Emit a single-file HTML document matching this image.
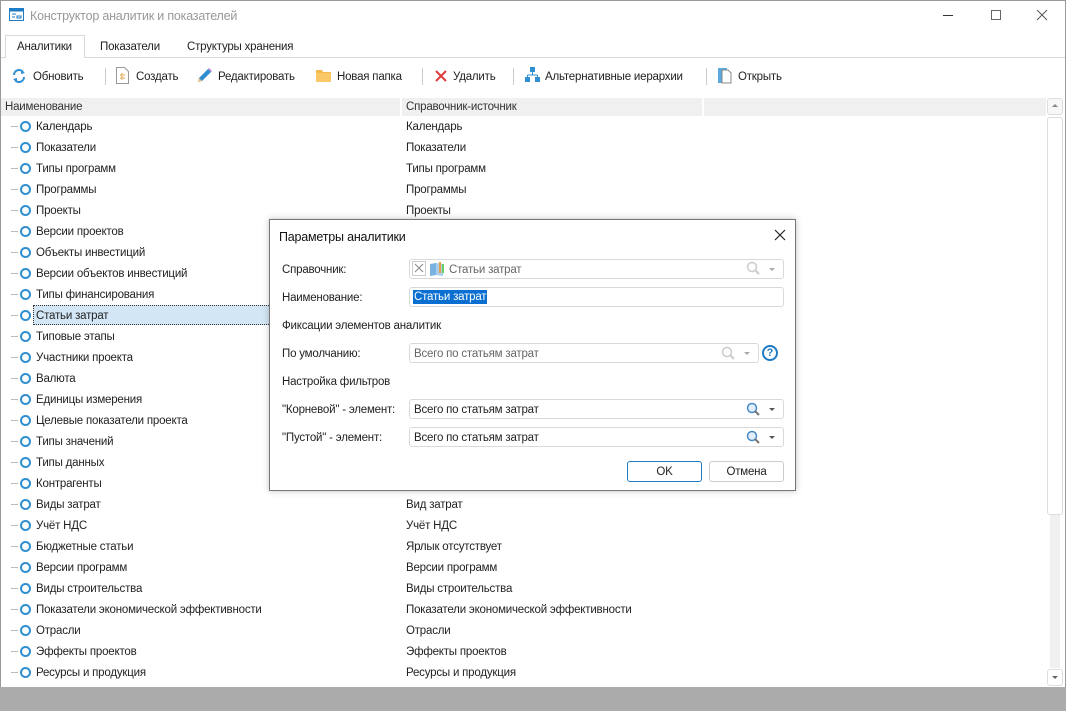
<!DOCTYPE html>
<html><head><meta charset="utf-8"><style>
*{box-sizing:border-box;margin:0;padding:0}
body{width:1066px;height:711px;position:relative;overflow:hidden;background:#fff;font-family:"Liberation Sans",sans-serif;font-size:11.5px;letter-spacing:-0.2px;color:#222;line-height:16px}
.a{position:absolute;white-space:nowrap}
.row{position:absolute;left:0;width:1046px;height:21px;line-height:23px}
.row .dash{position:absolute;left:11px;top:10px;width:7px;border-top:1px solid #bbb}
.row .c{position:absolute;left:20px;top:5px;width:11px;height:11px;border:2px solid #2f8fd1;border-radius:50%}
.row .n{position:absolute;left:36px}
.row .s{position:absolute;left:406px}
.inp{position:absolute;border:1px solid #d9d9d9;border-radius:3px;background:#fff;height:20px;line-height:20px;padding-left:4px}
.lbl{position:absolute;left:282px}
.sep{position:absolute;top:68px;width:1px;height:17px;background:#ccc}
</style></head><body>
<div class="a" style="left:0;top:0;width:1066px;height:711px;border:1px solid #999"></div>
<svg class="a" style="left:9px;top:8px" width="15" height="13"><rect x="0.5" y="0.5" width="14" height="12" fill="#fff" stroke="#1e7bc4"/><rect x="0.5" y="0.5" width="14" height="3" fill="#1e7bc4"/><line x1="3" y1="6" x2="7" y2="6" stroke="#1e7bc4"/><line x1="3" y1="9" x2="6" y2="9" stroke="#1e7bc4"/><rect x="8" y="8" width="4" height="2" fill="none" stroke="#1e7bc4"/></svg>
<div class="a" style="left:30px;top:8px;font-size:12.5px;color:#999">Конструктор аналитик и показателей</div>
<div class="a" style="left:943px;top:15px;width:10px;border-top:1px solid #333"></div>
<div class="a" style="left:991px;top:10px;width:10px;height:10px;border:1px solid #666"></div>
<svg class="a" style="left:1036px;top:9px" width="12" height="12"><path d="M1 1L11 11M11 1L1 11" stroke="#555"/></svg>
<div class="a" style="left:1px;top:57px;width:1064px;border-top:1px solid #d9d9d9"></div>
<div class="a" style="left:5px;top:35px;width:80px;height:23px;background:#fff;border:1px solid #d9d9d9;border-bottom:none"></div>
<div class="a" style="left:17px;top:39px">Аналитики</div>
<div class="a" style="left:100px;top:39px">Показатели</div>
<div class="a" style="left:187px;top:39px">Структуры хранения</div>
<svg class="a" style="left:11px;top:68px" width="16" height="16"><path d="M3 7A5 5 0 0 1 12 4" stroke="#2f8fd1" stroke-width="2" fill="none"/><path d="M13 9A5 5 0 0 1 4 12" stroke="#2f8fd1" stroke-width="2" fill="none"/><path d="M10 2L14 5L10 6Z M6 14L2 11L6 10Z" fill="#2f8fd1"/></svg>
<div class="a" style="left:33px;top:69px">Обновить</div>
<div class="sep" style="left:105px"></div>
<svg class="a" style="left:116px;top:67px" width="13" height="17"><path d="M0.5 0.5H8.5L12.5 4.5V16.5H0.5Z" fill="#fff" stroke="#999"/><path d="M4 8H6M7 8H9M4 11H6M7 11H9M6 6V13" stroke="#e0a040"/></svg>
<div class="a" style="left:136px;top:69px">Создать</div>
<svg class="a" style="left:196px;top:67px" width="17" height="17"><path d="M2 15L3 11L12 2L15 5L6 14Z" fill="#2f8fd1"/><path d="M12 2L15 5L16 4L13 1Z" fill="#c080d0"/><path d="M2 15L3 11L6 14Z" fill="#f0c080"/></svg>
<div class="a" style="left:218px;top:69px">Редактировать</div>
<svg class="a" style="left:316px;top:69px" width="15" height="13"><path d="M0 1H6L7 3H15V13H0Z" fill="#f5b94d"/><rect x="0" y="4" width="15" height="9" fill="#fbc869"/></svg>
<div class="a" style="left:337px;top:69px">Новая папка</div>
<div class="sep" style="left:422px"></div>
<svg class="a" style="left:435px;top:70px" width="12" height="12"><path d="M1 1L11 11M11 1L1 11" stroke="#e03c3c" stroke-width="2"/></svg>
<div class="a" style="left:453px;top:69px">Удалить</div>
<div class="sep" style="left:513px"></div>
<svg class="a" style="left:525px;top:67px" width="15" height="15"><rect x="5" y="0" width="5" height="5" fill="#2f8fd1"/><rect x="0" y="10" width="5" height="5" fill="#2f8fd1"/><rect x="10" y="10" width="5" height="5" fill="#2f8fd1"/><path d="M7.5 5V8M2.5 8H12.5M2.5 8V10M12.5 8V10" stroke="#2f8fd1"/></svg>
<div class="a" style="left:545px;top:69px">Альтернативные иерархии</div>
<div class="sep" style="left:706px"></div>
<svg class="a" style="left:718px;top:67px" width="14" height="17"><path d="M0 1H9V16H0Z" fill="#5aa8dc"/><path d="M4 3H10L13 6V16H4Z" fill="#fff" stroke="#888"/></svg>
<div class="a" style="left:738px;top:69px">Открыть</div>
<div class="a" style="left:1px;top:98px;width:1045px;height:18px;background:#f0f0f0"></div>
<div class="a" style="left:400px;top:98px;width:2px;height:18px;background:#fff"></div>
<div class="a" style="left:702px;top:98px;width:2px;height:18px;background:#fff"></div>
<div class="a" style="left:5px;top:99px;color:#333">Наименование</div>
<div class="a" style="left:406px;top:99px;color:#333">Справочник-источник</div>
<div class="a" style="left:33px;top:305px;width:380px;height:20px;background:#d3e6f5;border:1px dotted #333"></div>
<div class="row" style="top:116px"><i class="dash"></i><i class="c"></i><span class="n">Календарь</span><span class="s">Календарь</span></div>
<div class="row" style="top:137px"><i class="dash"></i><i class="c"></i><span class="n">Показатели</span><span class="s">Показатели</span></div>
<div class="row" style="top:158px"><i class="dash"></i><i class="c"></i><span class="n">Типы программ</span><span class="s">Типы программ</span></div>
<div class="row" style="top:179px"><i class="dash"></i><i class="c"></i><span class="n">Программы</span><span class="s">Программы</span></div>
<div class="row" style="top:200px"><i class="dash"></i><i class="c"></i><span class="n">Проекты</span><span class="s">Проекты</span></div>
<div class="row" style="top:221px"><i class="dash"></i><i class="c"></i><span class="n">Версии проектов</span></div>
<div class="row" style="top:242px"><i class="dash"></i><i class="c"></i><span class="n">Объекты инвестиций</span></div>
<div class="row" style="top:263px"><i class="dash"></i><i class="c"></i><span class="n">Версии объектов инвестиций</span></div>
<div class="row" style="top:284px"><i class="dash"></i><i class="c"></i><span class="n">Типы финансирования</span></div>
<div class="row" style="top:305px"><i class="dash"></i><i class="c"></i><span class="n">Статьи затрат</span></div>
<div class="row" style="top:326px"><i class="dash"></i><i class="c"></i><span class="n">Типовые этапы</span></div>
<div class="row" style="top:347px"><i class="dash"></i><i class="c"></i><span class="n">Участники проекта</span></div>
<div class="row" style="top:368px"><i class="dash"></i><i class="c"></i><span class="n">Валюта</span></div>
<div class="row" style="top:389px"><i class="dash"></i><i class="c"></i><span class="n">Единицы измерения</span></div>
<div class="row" style="top:410px"><i class="dash"></i><i class="c"></i><span class="n">Целевые показатели проекта</span></div>
<div class="row" style="top:431px"><i class="dash"></i><i class="c"></i><span class="n">Типы значений</span></div>
<div class="row" style="top:452px"><i class="dash"></i><i class="c"></i><span class="n">Типы данных</span></div>
<div class="row" style="top:473px"><i class="dash"></i><i class="c"></i><span class="n">Контрагенты</span></div>
<div class="row" style="top:494px"><i class="dash"></i><i class="c"></i><span class="n">Виды затрат</span><span class="s">Вид затрат</span></div>
<div class="row" style="top:515px"><i class="dash"></i><i class="c"></i><span class="n">Учёт НДС</span><span class="s">Учёт НДС</span></div>
<div class="row" style="top:536px"><i class="dash"></i><i class="c"></i><span class="n">Бюджетные статьи</span><span class="s">Ярлык отсутствует</span></div>
<div class="row" style="top:557px"><i class="dash"></i><i class="c"></i><span class="n">Версии программ</span><span class="s">Версии программ</span></div>
<div class="row" style="top:578px"><i class="dash"></i><i class="c"></i><span class="n">Виды строительства</span><span class="s">Виды строительства</span></div>
<div class="row" style="top:599px"><i class="dash"></i><i class="c"></i><span class="n">Показатели экономической эффективности</span><span class="s">Показатели экономической эффективности</span></div>
<div class="row" style="top:620px"><i class="dash"></i><i class="c"></i><span class="n">Отрасли</span><span class="s">Отрасли</span></div>
<div class="row" style="top:641px"><i class="dash"></i><i class="c"></i><span class="n">Эффекты проектов</span><span class="s">Эффекты проектов</span></div>
<div class="row" style="top:662px"><i class="dash"></i><i class="c"></i><span class="n">Ресурсы и продукция</span><span class="s">Ресурсы и продукция</span></div>
<div class="a" style="left:1046px;top:98px;width:18px;height:589px;background:#fff"></div>
<div class="a" style="left:1050px;top:117px;width:10px;height:551px;background:#f0f0f0"></div>
<div class="a" style="left:1047px;top:98px;width:16px;height:17px;border:1px solid #ddd;border-radius:3px;background:#f7f7f7"></div>
<div class="a" style="left:1052px;top:104px;border:3px solid transparent;border-bottom:3px solid #888;border-top:none"></div>
<div class="a" style="left:1047px;top:117px;width:16px;height:398px;border:1px solid #ddd;border-radius:3px;background:#fff"></div>
<div class="a" style="left:1047px;top:669px;width:16px;height:17px;border:1px solid #ddd;border-radius:3px;background:#fff"></div>
<div class="a" style="left:1052px;top:676px;border:3px solid transparent;border-top:3px solid #666;border-bottom:none"></div>
<div class="a" style="left:0;top:687px;width:1066px;height:24px;background:#ababab"></div>
<div class="a" style="left:269px;top:219px;width:527px;height:272px;background:#fff;border:1px solid #777;box-shadow:0 0 6px rgba(0,0,0,.25)"></div>
<div class="a" style="left:279px;top:229px;font-size:12.5px;color:#111">Параметры аналитики</div>
<svg class="a" style="left:774px;top:229px" width="12" height="12"><path d="M1 1L11 11M11 1L1 11" stroke="#222" stroke-width="1.2"/></svg>
<div class="lbl" style="top:262px">Справочник:</div>
<div class="inp" style="left:409px;top:259px;width:375px"></div>
<div class="a" style="left:412px;top:261px;width:14px;height:15px;border:1px solid #ccc"></div>
<svg class="a" style="left:414px;top:263px" width="10" height="10"><path d="M1 1L9 9M9 1L1 9" stroke="#888"/></svg>
<svg class="a" style="left:429px;top:261px" width="18" height="16"><path d="M1 3L7 2V14L1 15Z" fill="#7ab3e0"/><path d="M7 2L14 3V15L7 14Z" fill="#a8cdef"/><rect x="10" y="1" width="2" height="11" fill="#e8a040"/><rect x="13" y="3" width="2" height="9" fill="#6c6"/></svg>
<div class="a" style="left:449px;top:262px;color:#666">Статьи затрат</div>
<svg class="a" style="left:746px;top:261px" width="14" height="14"><circle cx="6" cy="6" r="4.5" fill="none" stroke="#ccc" stroke-width="1.5"/><path d="M9 9L13 13" stroke="#ccc" stroke-width="2"/></svg>
<div class="a" style="left:769px;top:268px;border:3px solid transparent;border-top:3px solid #aaa;border-bottom:none"></div>
<div class="lbl" style="top:290px">Наименование:</div>
<div class="inp" style="left:409px;top:287px;width:375px"></div>
<div class="a" style="left:413px;top:290px;height:14px;line-height:15px;background:#0a6fd0;color:#fff;padding:0 1px">Статьи затрат</div>
<div class="lbl" style="top:318px">Фиксации элементов аналитик</div>
<div class="lbl" style="top:346px">По умолчанию:</div>
<div class="inp" style="left:409px;top:343px;width:350px;color:#666">Всего по статьям затрат</div>
<svg class="a" style="left:721px;top:346px" width="14" height="14"><circle cx="6" cy="6" r="4.5" fill="none" stroke="#ccc" stroke-width="1.5"/><path d="M9 9L13 13" stroke="#ccc" stroke-width="2"/></svg>
<div class="a" style="left:744px;top:352px;border:3px solid transparent;border-top:3px solid #aaa;border-bottom:none"></div>
<div class="a" style="left:762px;top:345px;width:16px;height:16px;border:2px solid #1e7bc4;border-radius:50%;color:#1e7bc4;font-weight:bold;font-size:11px;line-height:12px;text-align:center;letter-spacing:0">?</div>
<div class="lbl" style="top:374px">Настройка фильтров</div>
<div class="lbl" style="top:402px">"Корневой" - элемент:</div>
<div class="inp" style="left:409px;top:399px;width:375px">Всего по статьям затрат</div>
<svg class="a" style="left:746px;top:402px" width="14" height="14"><circle cx="6" cy="6" r="4.5" fill="#e3effa" stroke="#4a8ac8" stroke-width="1.5"/><path d="M9 9L13 13" stroke="#777" stroke-width="2"/></svg>
<div class="a" style="left:769px;top:408px;border:3px solid transparent;border-top:3px solid #555;border-bottom:none"></div>
<div class="lbl" style="top:430px">"Пустой" - элемент:</div>
<div class="inp" style="left:409px;top:427px;width:375px">Всего по статьям затрат</div>
<svg class="a" style="left:746px;top:430px" width="14" height="14"><circle cx="6" cy="6" r="4.5" fill="#e3effa" stroke="#4a8ac8" stroke-width="1.5"/><path d="M9 9L13 13" stroke="#777" stroke-width="2"/></svg>
<div class="a" style="left:769px;top:436px;border:3px solid transparent;border-top:3px solid #555;border-bottom:none"></div>
<div class="a" style="left:627px;top:461px;width:75px;height:21px;border:1px solid #1e7bc4;border-radius:3px;text-align:center;line-height:20px">OK</div>
<div class="a" style="left:709px;top:461px;width:75px;height:21px;border:1px solid #ccc;border-radius:3px;text-align:center;line-height:20px">Отмена</div>
</body></html>
